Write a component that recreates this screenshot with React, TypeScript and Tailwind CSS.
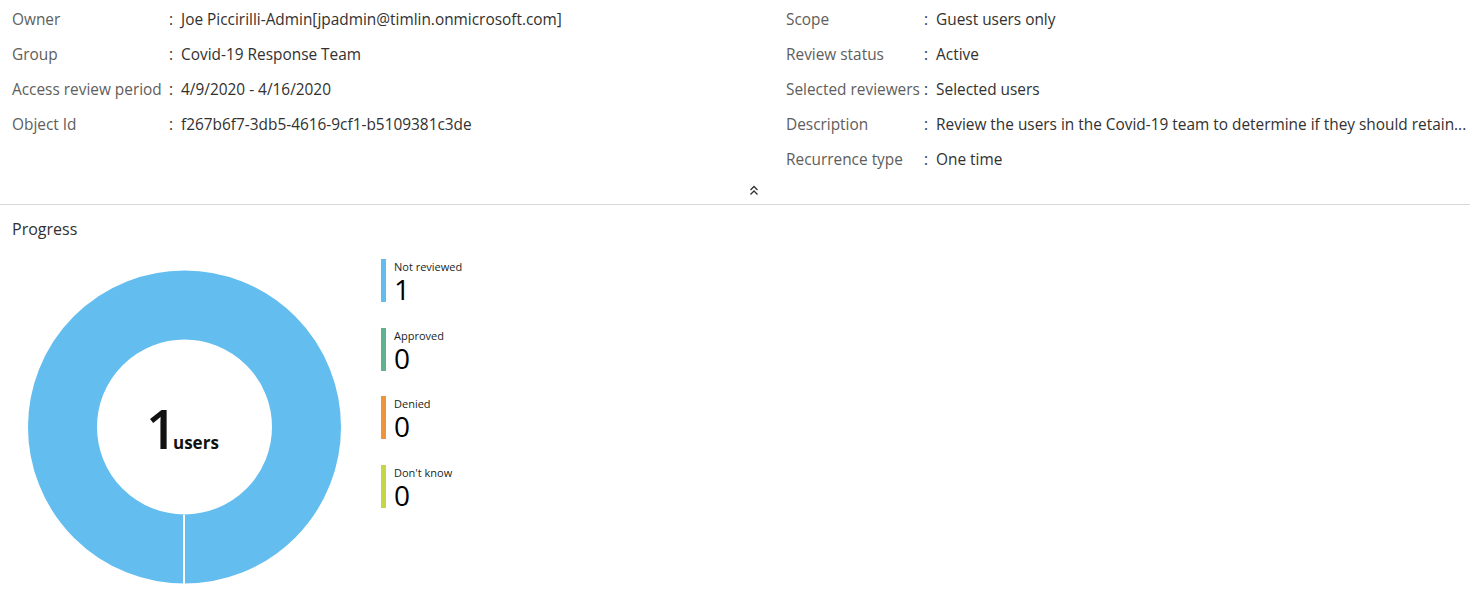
import React from 'react';

interface Field {
  label: string;
  value: string;
}

const leftFields: Field[] = [
  { label: 'Owner', value: 'Joe Piccirilli-Admin[jpadmin@timlin.onmicrosoft.com]' },
  { label: 'Group', value: 'Covid-19 Response Team' },
  { label: 'Access review period', value: '4/9/2020 - 4/16/2020' },
  { label: 'Object Id', value: 'f267b6f7-3db5-4616-9cf1-b5109381c3de' },
];

const rightFields: Field[] = [
  { label: 'Scope', value: 'Guest users only' },
  { label: 'Review status', value: 'Active' },
  { label: 'Selected reviewers', value: 'Selected users' },
  { label: 'Description', value: 'Review the users in the Covid-19 team to determine if they should retain...' },
  { label: 'Recurrence type', value: 'One time' },
];

const legend = [
  { label: 'Not reviewed', value: 1, bar: 'bg-[#63bcef]' },
  { label: 'Approved', value: 0, bar: 'bg-[#5fb18f]' },
  { label: 'Denied', value: 0, bar: 'bg-[#ef943a]' },
  { label: "Don't know", value: 0, bar: 'bg-[#c4d546]' },
];

const FieldList = ({ fields, labelWidth }: { fields: Field[]; labelWidth: string }) => (
  <div className="flex flex-col">
    {fields.map((f) => (
      <div key={f.label} className="flex h-[35px] items-center text-[15.4px] whitespace-nowrap">
        <span className={`${labelWidth} text-[#605e5c]`}>{f.label}</span>
        <span className="text-[#323130]">:&nbsp; {f.value}</span>
      </div>
    ))}
  </div>
);

const Donut = () => (
  <svg width="314" height="316" viewBox="0 0 314 316">
    <circle cx="156.5" cy="157" r="122" fill="none" stroke="#64bdef" strokeWidth="69" />
    <line x1="156" y1="245" x2="156" y2="316" stroke="#ffffff" strokeWidth="2" />
    <text x="149" y="179" textAnchor="end" fontSize="54" fontWeight="600" fill="#111">1</text>
    <text x="145" y="179" fontSize="17" fontWeight="700" fill="#111">users</text>
  </svg>
);

export default function App() {
  return (
    <div className="w-[1476px] h-[602px] bg-white font-['Open_Sans',Arial,sans-serif] overflow-hidden">
      <div className="flex pt-[2px] pl-[12px]">
        <div className="w-[774px]">
          <FieldList fields={leftFields} labelWidth="w-[157px]" />
        </div>
        <FieldList fields={rightFields} labelWidth="w-[138px]" />
      </div>

      <div className="flex justify-center w-[1470px] h-[18px] items-center mt-[4px]">
        <svg width="10" height="11" viewBox="0 0 10 11" className="ml-[38px]">
          <path d="M1.5 5 L5 1.5 L8.5 5 M1.5 9.5 L5 6 L8.5 9.5" fill="none" stroke="#323130" strokeWidth="1.3" />
        </svg>
      </div>

      <div className="w-[1470px] h-px bg-[#d9d9d9] mt-[5px]" />

      <div className="pl-[12px] pt-[14px]">
        <div className="text-[16px] text-[#323130] leading-[20px]">Progress</div>
        <div className="flex items-start mt-[20px]">
          <div className="ml-[16px] mt-[11px]">
            <Donut />
          </div>
          <div className="ml-[39px] flex flex-col gap-[25.5px]">
            {legend.map((l) => (
              <div key={l.label} className="flex h-[43px]">
                <div className={`w-[5px] h-full ${l.bar}`} />
                <div className="ml-[8px] flex flex-col">
                  <span className="text-[11px] leading-[13px] text-[#201f1e] mt-[1px]">{l.label}</span>
                  <span className="text-[28px] leading-[24px] text-[#000] mt-[4px]">{l.value}</span>
                </div>
              </div>
            ))}
          </div>
        </div>
      </div>
    </div>
  );
}
